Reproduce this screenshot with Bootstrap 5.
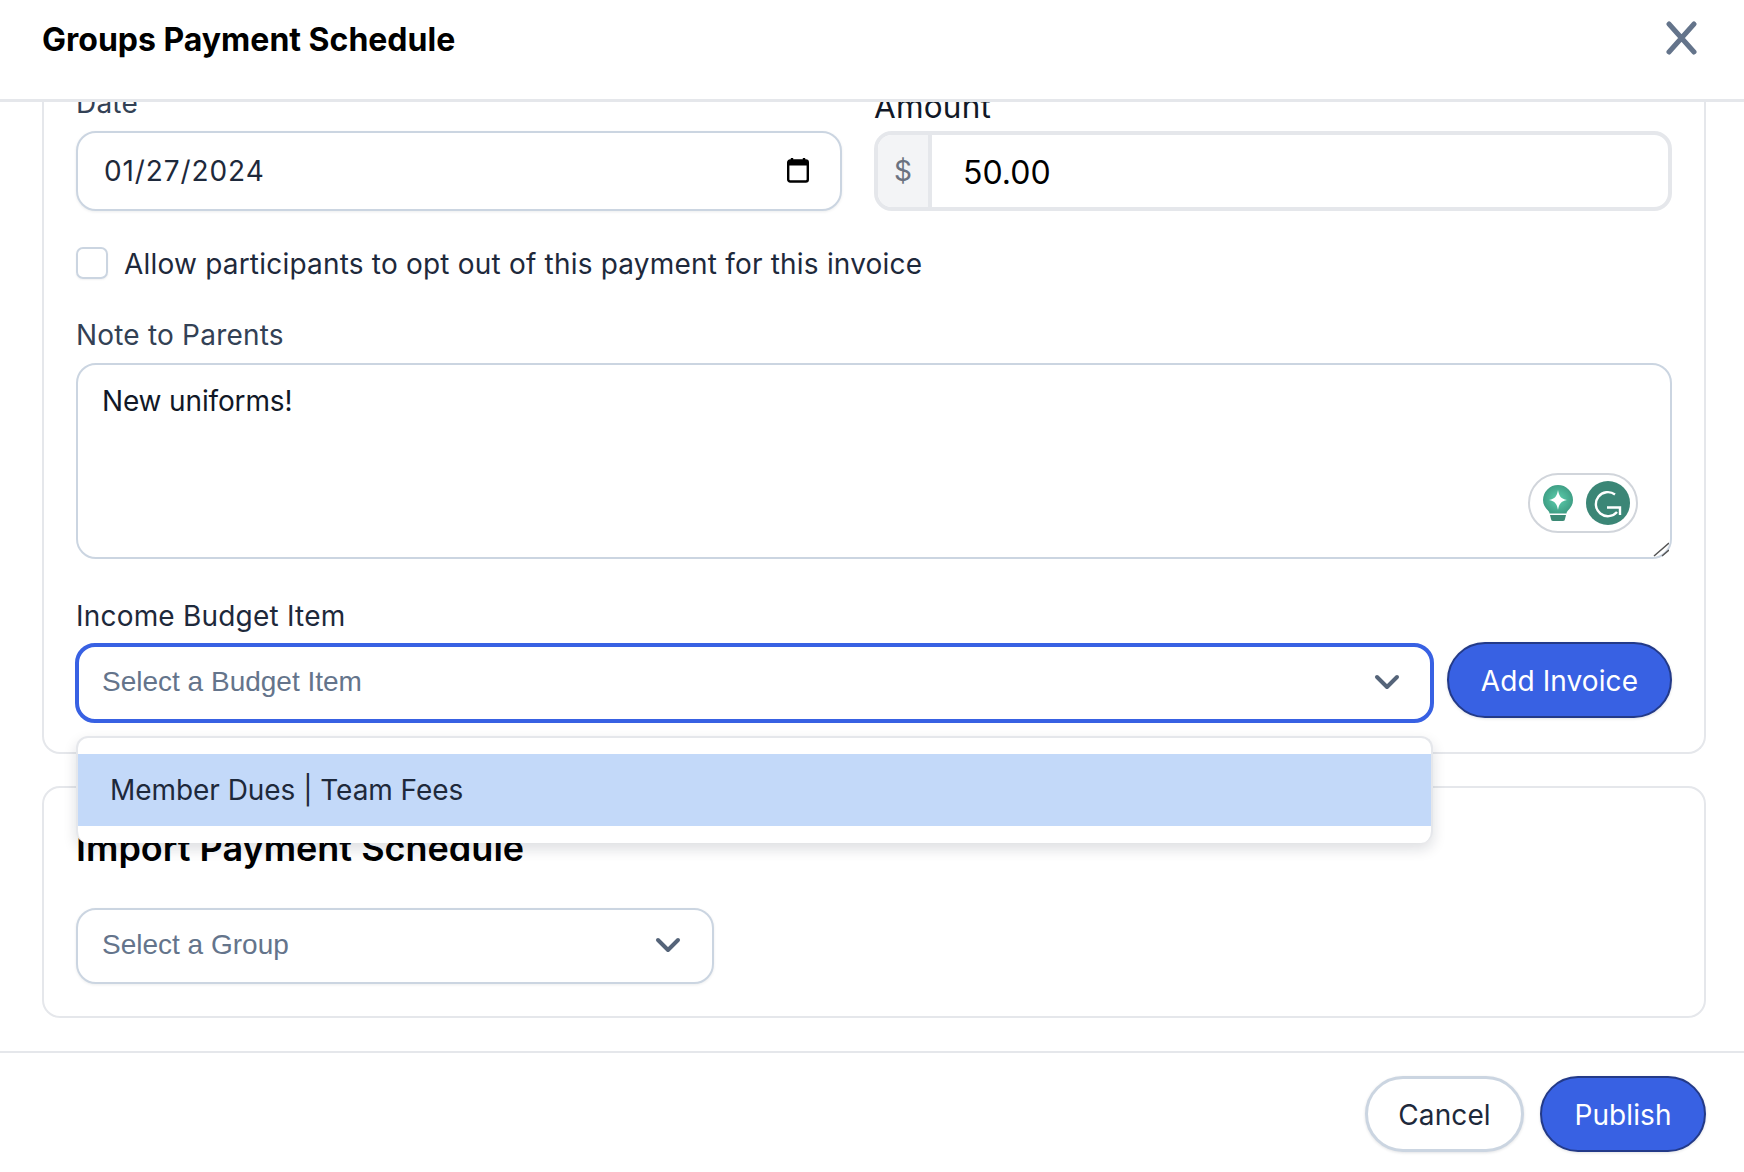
<!doctype html>
<html lang="en"><head><meta charset="utf-8"><title>Groups Payment Schedule</title>
<link href="https://cdn.jsdelivr.net/npm/bootstrap@5.3.0/dist/css/bootstrap.min.css" rel="stylesheet">
<style>
html,body{height:100%;margin:0;background:#fff;font-family:Inter,"Liberation Sans",sans-serif;color:#1e293b}
.shell{width:1744px;height:1172px;overflow:hidden}
.head{height:102px;border-bottom:3px solid #e5e7eb;padding:0 46px 0 42px}
.ttl{font-size:32px;font-weight:700;color:#000;margin:0 0 20px;line-height:1.3}
.xbtn{background:none;border:0;padding:0;margin:0 0 24px;width:34px;height:34px;color:#64748b;line-height:0}
.bodywrap{height:949px;overflow:hidden;padding:0 38px 0 42px}
.panel{border:2px solid #e5e7eb;border-radius:18px}
.panel-a{height:653px;margin-top:-1px;border-top:0;border-top-left-radius:0;border-top-right-radius:0;padding:0 32px;margin-bottom:32px}
.panel-b{height:232px;padding:32px;position:relative}
.flabel{font-size:28px;line-height:40px;color:#334155;display:block;margin:0;letter-spacing:.2px}
.lbl-date{margin-top:-18px;height:48px}
.lbl-amt{color:#111827;font-size:31.5px;margin-top:-14px;height:44px}
.fld{height:80px;border:2px solid #cbd5e1;border-radius:20px;background:#fff;box-shadow:0 1px 3px rgba(15,23,42,.08);font-size:28px;display:flex;align-items:center;padding:0 30px 0 26px;color:#1e293b}
.dateval{letter-spacing:.9px}
.cal{margin-top:-2px}
.amt{height:80px;border:4px solid #e5e7eb;border-radius:18px;display:flex;overflow:hidden;font-size:32px;color:#000}
.amt-pre{width:54px;background:#f3f4f6;border-right:4px solid #e5e7eb;color:#6b7280;font-size:28px;display:flex;align-items:center;justify-content:center}
.amt-val{padding:3px 0 0 31px;display:flex;align-items:center}
.chk{width:32px;height:32px;border:2px solid #cbd5e1;border-radius:7px;flex:none;box-shadow:0 1px 2px rgba(15,23,42,.06)}
.chkrow{margin-top:36px;height:32px;font-size:28px;color:#1e293b;gap:16px;letter-spacing:.2px}
.chkrow>span+span{padding-top:2px}
.txta{height:196px;border:2px solid #cbd5e1;border-radius:20px;margin-top:8px;padding:17px 24px;font-size:28px;color:#111827;position:relative;line-height:38px;letter-spacing:-.15px}
.gram{position:absolute;right:32px;top:108px;width:110px;height:60px;border:2px solid #d1d5db;border-radius:30px;display:flex;align-items:center;justify-content:space-between;padding:0 6px 0 13px;background:#fff}
.grip{position:absolute;right:1px;bottom:0}
.sel{height:80px;border:4px solid #3861e3;border-radius:20px;display:flex;align-items:center;justify-content:space-between;padding:0 30px 0 23px;font-size:28px;color:#64748b;flex:1;font-family:"Liberation Sans",Arial,sans-serif}
.sel>span{margin-top:-2px}
.sel>svg{margin-top:-3px}
.sel2{border:2px solid #cbd5e1;height:76px;width:638px;flex:none;padding:0 31px 0 24px;box-shadow:0 1px 3px rgba(15,23,42,.08);margin-top:38px}
.pill{font-size:28px;border-radius:38px;height:76px;display:flex;align-items:center;justify-content:center;line-height:1;box-shadow:0 1px 3px rgba(15,23,42,.12);letter-spacing:.1px;padding-bottom:4px}
.pill-p{background:#3861e3;border:2px solid #233a88;color:#fff}
.pill-p:hover{background:#3861e3;color:#fff}
.pill-c{background:#fff;border:3px solid #cbd5e1;color:#1e293b}
.menu-pop{position:absolute;left:32px;top:635px;width:1357px;height:107px;padding:16px 0;background:#fff;border:2px solid #e5e7eb;border-bottom:0;border-radius:12px;box-shadow:0 6px 14px rgba(15,23,42,.14);z-index:5;margin:0}
.opt{background:#c3d9f9;height:72px;padding:0 32px;font-size:28px;color:#1e293b;display:flex;align-items:center;letter-spacing:-.05px}
.h-import{font-size:36px;font-weight:600;color:#000;margin:0;line-height:44px;padding-top:6px}
.foot{height:121px;border-top:2px solid #e5e7eb;margin-top:0;padding:23px 38px 0 0;gap:16px}
.relbox{position:relative}
.addbtn{width:225px;margin-top:-1px}
</style></head><body>
<div class="shell d-flex flex-column">
<div class="head d-flex align-items-center justify-content-between flex-none">
 <h5 class="ttl">Groups Payment Schedule</h5>
 <button class="xbtn" aria-label="Close"><svg width="34" height="34" viewBox="0 0 34 34"><path d="M5 3 L30 31 M30 3 L5 31" stroke="#64748b" stroke-width="5" stroke-linecap="round" fill="none"/></svg></button>
</div>
<div class="bodywrap">
 <div class="panel panel-a relbox">
  <div class="row gx-0">
   <div class="col-auto">
    <label class="flabel lbl-date">Date</label>
    <div class="fld justify-content-between" style="width:766px"><span class="dateval">01/27/2024</span>
     <svg class="cal" width="24" height="26" viewBox="0 0 24 26"><path d="M6 1v4M18 1v4" stroke="#000" stroke-width="2.4"/><rect x="2.2" y="3.5" width="19.6" height="21" rx="2" fill="none" stroke="#000" stroke-width="2.4"/><rect x="2.2" y="3.5" width="19.6" height="5" fill="#000"/></svg></div>
   </div>
   <div class="col-auto ms-auto">
    <label class="flabel lbl-amt">Amount</label>
    <div class="amt" style="width:798px"><div class="amt-pre">$</div><div class="amt-val">50.00</div></div>
   </div>
  </div>
  <div class="d-flex align-items-center chkrow"><span class="chk"></span><span>Allow participants to opt out of this payment for this invoice</span></div>
  <label class="flabel" style="margin-top:36px">Note to Parents</label>
  <div class="txta">New uniforms!
   <div class="gram">
    <svg width="30" height="36" viewBox="0 0 30 36"><defs><radialGradient id="bulbg" cx=".5" cy=".5" r=".5"><stop offset="0" stop-color="#5dcfae"/><stop offset="1" stop-color="#3f9f85"/></radialGradient></defs><path d="M15 0a15 15 0 0 1 15 15c0 5-2.500 8-5 10.500-1 1-1.500 2-1.500 3H6.500c0-1-.5-2-1.500-3C2.500 23 0 20 0 15A15 15 0 0 1 15 0z" fill="url(#bulbg)"/><path d="M7 30h16l-1 4a2 2 0 0 1-2 2H10a2 2 0 0 1-2-2z" fill="#3b8a75"/><path d="M15 5c1 6 3 9 9 10-6 1-8 4-9 10-1-6-3-9-9-10 6-1 8-4 9-10z" fill="#fff"/></svg>
    <svg width="44" height="44" viewBox="0 0 44 44"><circle cx="22" cy="22" r="22" fill="#3b8676"/><path d="M29 13.500A12 12 0 1 0 31 31" fill="none" stroke="#fff" stroke-width="2.400"/><path d="M21 26.500H34V34" fill="none" stroke="#fff" stroke-width="2.400"/></svg>
   </div>
   <svg class="grip" width="18" height="18" viewBox="0 0 18 18"><path d="M3 17L18 4M11 17l7-6" stroke="#555" stroke-width="1.500"/></svg>
  </div>
  <label class="flabel" style="margin-top:37px;color:#1e293b">Income Budget Item</label>
  <div class="d-flex align-items-start" style="gap:13px;margin:7px 0 0 -1px">
   <div class="sel"><span>Select a Budget Item</span><svg width="26" height="16" viewBox="0 0 26 16"><path d="M3 3l10 10L23 3" fill="none" stroke="#556479" stroke-width="4" stroke-linecap="round" stroke-linejoin="round"/></svg></div>
   <button class="btn pill pill-p addbtn">Add Invoice</button>
  </div>
  <div class="menu-pop"><div class="opt">Member Dues&nbsp;|&nbsp;Team Fees</div></div>
 </div>
 <div class="panel panel-b">
  <h5 class="h-import">Import Payment Schedule</h5>
  <div class="fld sel sel2"><span>Select a Group</span><svg width="26" height="16" viewBox="0 0 26 16"><path d="M3 3l10 10L23 3" fill="none" stroke="#556479" stroke-width="4" stroke-linecap="round" stroke-linejoin="round"/></svg></div>
 </div>
</div>
<div class="foot d-flex justify-content-end align-items-start">
 <button class="btn pill pill-c" style="width:159px">Cancel</button>
 <button class="btn pill pill-p" style="width:166px">Publish</button>
</div>
</div>
<script src="https://cdn.jsdelivr.net/npm/bootstrap@5.3.0/dist/js/bootstrap.bundle.min.js"></script>
</body></html>
